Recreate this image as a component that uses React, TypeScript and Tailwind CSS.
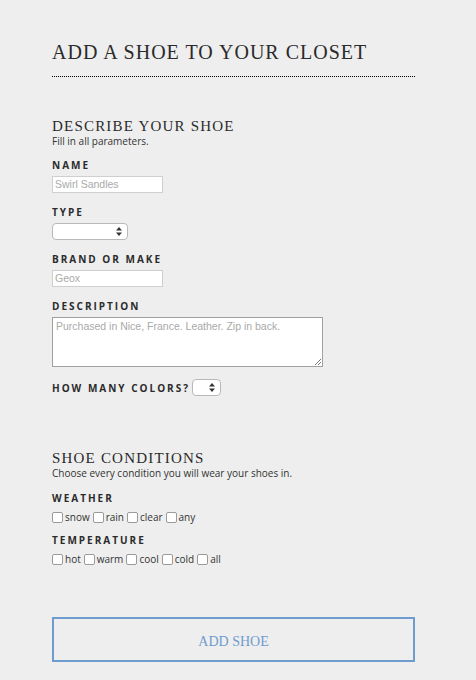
import { ReactNode } from "react";

const serif = "font-['Liberation_Serif','DejaVu_Serif',serif]";
const sans = "font-['Open_Sans','Liberation_Sans',sans-serif]";

function Label({ children }: { children: ReactNode }) {
  return (
    <div className={`${sans} text-[10px] font-bold tracking-[2px] text-[#2b2b2b] leading-[14px]`}>
      {children}
    </div>
  );
}

function Arrows() {
  return (
    <svg width="6" height="9" viewBox="0 0 6 9" className="fill-[#333]">
      <path d="M3 0 L6 3.5 L0 3.5 Z" />
      <path d="M3 9 L6 5.5 L0 5.5 Z" />
    </svg>
  );
}

function Select({ width }: { width: string }) {
  return (
    <div
      className={`${width} h-[17px] bg-white border border-[#b9b9b9] rounded-[4px] flex items-center justify-end pr-[5px]`}
    >
      <Arrows />
    </div>
  );
}

function TextInput({ placeholder }: { placeholder: string }) {
  return (
    <div className="w-[111px] h-[17px] bg-white border border-[#cfcfcf] flex items-center px-[2px]">
      <span className="font-['Liberation_Sans',sans-serif] text-[10.5px] leading-[13px] text-[#a9a9a9]">
        {placeholder}
      </span>
    </div>
  );
}

function Check({ label }: { label: string }) {
  return (
    <label className="flex items-center gap-[2px] mr-[3px]">
      <span className="w-[11px] h-[11px] bg-white border border-[#9a9a9a] rounded-[2px]" />
      <span className={`${sans} text-[10px] text-[#333] leading-[14px]`}>{label}</span>
    </label>
  );
}

export default function App() {
  return (
    <div className="min-h-[680px] bg-[#eeeeee] px-[52px] pt-[40px] pb-[19px]">
      <h1
        className={`${serif} text-[20px] leading-[24px] tracking-[1px] text-[#2a2a2a] w-[363px] pb-[12px] border-b border-dotted border-black`}
      >
        ADD A SHOE TO YOUR CLOSET
      </h1>

      <h2 className={`${serif} text-[15px] leading-[18px] tracking-[1.2px] text-[#2a2a2a] mt-[40px]`}>
        DESCRIBE YOUR SHOE
      </h2>
      <p className={`${sans} text-[10px] leading-[12px] text-[#333]`}>Fill in all parameters.</p>

      <div className="mt-[11px]">
        <Label>NAME</Label>
        <div className="mt-[4px]">
          <TextInput placeholder="Swirl Sandles" />
        </div>
      </div>

      <div className="mt-[12px]">
        <Label>TYPE</Label>
        <div className="mt-[4px]">
          <Select width="w-[76px]" />
        </div>
      </div>

      <div className="mt-[12px]">
        <Label>BRAND OR MAKE</Label>
        <div className="mt-[4px]">
          <TextInput placeholder="Geox" />
        </div>
      </div>

      <div className="mt-[12px]">
        <Label>DESCRIPTION</Label>
        <div className="mt-[4px] w-[271px] h-[50px] bg-white border border-[#a0a0a0] relative">
          <div className="font-['Liberation_Sans',sans-serif] text-[10.5px] leading-[13px] text-[#a9a9a9] px-[3px] pt-[2px]">
            Purchased in Nice, France. Leather. Zip in back.
          </div>
          <svg width="6" height="6" viewBox="0 0 6 6" className="absolute right-[1px] bottom-[1px] stroke-[#777]">
            <path d="M0 6 L6 0 M3 6 L6 3" strokeWidth="1" />
          </svg>
        </div>
      </div>

      <div className="mt-[12px] flex items-center gap-[2px]">
        <Label>HOW MANY COLORS?</Label>
        <Select width="w-[29px]" />
      </div>

      <h2 className={`${serif} text-[15px] leading-[18px] tracking-[1.2px] text-[#2a2a2a] mt-[53px]`}>
        SHOE CONDITIONS
      </h2>
      <p className={`${sans} text-[10px] leading-[12px] text-[#333]`}>
        Choose every condition you will wear your shoes in.
      </p>

      <div className="mt-[12px]">
        <Label>WEATHER</Label>
        <div className="mt-[5px] flex">
          <Check label="snow" />
          <Check label="rain" />
          <Check label="clear" />
          <Check label="any" />
        </div>
      </div>

      <div className="mt-[9px]">
        <Label>TEMPERATURE</Label>
        <div className="mt-[5px] flex">
          <Check label="hot" />
          <Check label="warm" />
          <Check label="cool" />
          <Check label="cold" />
          <Check label="all" />
        </div>
      </div>

      <button
        className={`${serif} mt-[51px] w-[363px] h-[45px] border-2 border-[#6e9ccf] text-[#6e9ccf] text-[14px] pt-[4px]`}
      >
        ADD SHOE
      </button>
    </div>
  );
}
